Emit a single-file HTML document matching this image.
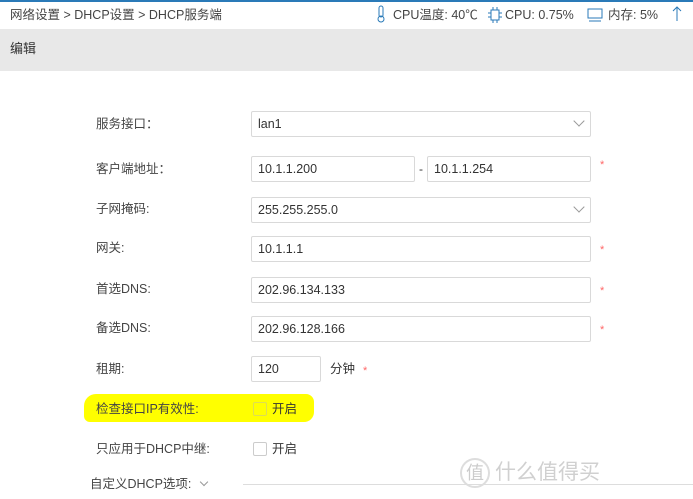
<!DOCTYPE html>
<html><head><meta charset="utf-8"><style>
*{margin:0;padding:0;box-sizing:border-box}
body{width:693px;height:499px;overflow:hidden;background:#fff;font-family:"Liberation Sans","Noto Sans CJK SC",sans-serif;font-size:12px;line-height:15px;color:#333;position:relative}
.a{position:absolute;white-space:nowrap}
.box{position:absolute;border:1px solid #d9d9d9;background:#fff;height:26px;line-height:24px;padding-left:6px;font-size:12.5px;color:#333;border-radius:2px}
.lab{position:absolute;left:96px;font-size:12.5px;color:#444;line-height:15px}
.star{position:absolute;color:#f66;font-size:11px;line-height:11px}
.chev{position:absolute;width:8px;height:8px;border-right:1px solid #999;border-bottom:1px solid #999;transform:rotate(45deg)}
.cb{position:absolute;width:14px;height:14px;border:1px solid #ccc;border-radius:2px;background:#fff}
</style></head><body>
<div class="a" style="left:0;top:0;width:693px;height:2px;background:#2a7ab8"></div>
<div class="a" style="left:10px;top:8px;font-size:12.5px;color:#444">网络设置 &gt; DHCP设置 &gt; DHCP服务端</div>
<svg class="a" style="left:376px;top:5px" width="10" height="18"><rect x="3" y="1" width="4" height="11" rx="2" fill="none" stroke="#2a7ab8"/><circle cx="5" cy="14" r="3" fill="none" stroke="#2a7ab8"/></svg>
<div class="a" style="left:393px;top:8px;font-size:12.5px;color:#444">CPU温度: 40℃</div>
<svg class="a" style="left:488px;top:7px" width="14" height="16"><rect x="3" y="3" width="8" height="10" fill="none" stroke="#2a7ab8"/><path d="M5 0v3M9 0v3M5 13v3M9 13v3M0 6h3M0 10h3M11 6h3M11 10h3" stroke="#2a7ab8"/></svg>
<div class="a" style="left:505px;top:8px;font-size:12.5px;color:#444">CPU: 0.75%</div>
<svg class="a" style="left:587px;top:8px" width="16" height="14"><rect x="1" y="1" width="14" height="9" fill="none" stroke="#2a7ab8"/><path d="M3 12v2M5 12v2M7 12v2M9 12v2M11 12v2M13 12v2" stroke="#2a7ab8"/></svg>
<div class="a" style="left:608px;top:8px;font-size:12.5px;color:#444">内存: 5%</div>
<svg class="a" style="left:672px;top:6px" width="10" height="16"><path d="M5 1v14M1 5l4-4 4 4" fill="none" stroke="#2a7ab8"/></svg>
<div class="a" style="left:0;top:29px;width:693px;height:42px;background:#e8e8e8"></div>
<div class="a" style="left:10px;top:41px;font-size:13px;color:#333">编辑</div>

<div class="lab" style="top:117px">服务接口：</div>
<div class="box" style="left:251px;top:111px;width:340px">lan1</div><div class="chev" style="left:575px;top:117px"></div>

<div class="lab" style="top:162px">客户端地址：</div>
<div class="box" style="left:251px;top:156px;width:164px">10.1.1.200</div>
<div class="a" style="left:419px;top:162px">-</div>
<div class="box" style="left:427px;top:156px;width:164px">10.1.1.254</div>
<div class="star" style="left:600px;top:160px">*</div>

<div class="lab" style="top:202px">子网掩码:</div>
<div class="box" style="left:251px;top:197px;width:340px">255.255.255.0</div><div class="chev" style="left:575px;top:203px"></div>

<div class="lab" style="top:241px">网关:</div>
<div class="box" style="left:251px;top:236px;width:340px">10.1.1.1</div>
<div class="star" style="left:600px;top:245px">*</div>

<div class="lab" style="top:282px">首选DNS:</div>
<div class="box" style="left:251px;top:277px;width:340px">202.96.134.133</div>
<div class="star" style="left:600px;top:286px">*</div>

<div class="lab" style="top:321px">备选DNS:</div>
<div class="box" style="left:251px;top:316px;width:340px">202.96.128.166</div>
<div class="star" style="left:600px;top:325px">*</div>

<div class="lab" style="top:362px">租期:</div>
<div class="box" style="left:251px;top:356px;width:70px">120</div>
<div class="a" style="left:330px;top:362px;font-size:12.5px">分钟</div>
<div class="star" style="left:363px;top:366px">*</div>

<div class="a" style="left:84px;top:394px;width:230px;height:28px;background:#ff0;border-radius:12px 8px 10px 6px"></div>
<div class="lab" style="top:402px">检查接口IP有效性:</div>
<div class="cb" style="left:253px;top:402px;background:transparent;border-color:#dd5"></div>
<div class="a" style="left:272px;top:402px;font-size:12.5px">开启</div>

<div class="lab" style="top:442px">只应用于DHCP中继:</div>
<div class="cb" style="left:253px;top:442px"></div>
<div class="a" style="left:272px;top:442px;font-size:12.5px">开启</div>

<div class="a" style="left:90px;top:477px;font-size:12.5px;color:#444">自定义DHCP选项:</div>
<div class="chev" style="left:201px;top:479px;width:6px;height:6px"></div>
<div class="a" style="left:243px;top:484px;width:450px;height:1px;background:#ddd"></div>
<div class="a" style="left:460px;top:458px;width:30px;height:30px;border:2px solid #ddd;border-radius:50%;color:#ccc;font-size:18px;text-align:center;line-height:26px">值</div>
<div class="a" style="left:495px;top:461px;font-size:21px;line-height:24px;color:#d0d0d0">什么值得买</div>
</body></html>
